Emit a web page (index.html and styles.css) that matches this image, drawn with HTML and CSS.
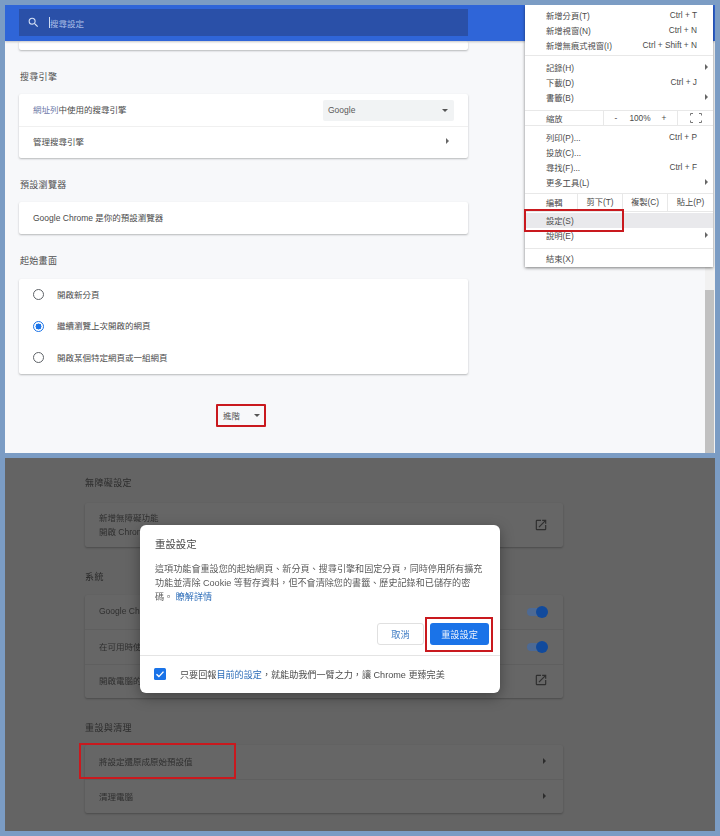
FILE: index.html
```html
<!DOCTYPE html>
<html lang="zh-Hant">
<head>
    <meta charset="UTF-8">
    <title>重設 Chrome 設定</title>
    <link rel="stylesheet" href="styles.css">
</head>
<body>
<div class="page">

    <!-- top shot: settings page with the Chrome menu open -->
    <div class="panel panel-top">
        <header class="header">
            <div class="search">
                <svg class="search-icon" viewBox="0 0 24 24"><path d="M15.5 14h-.79l-.28-.27A6.47 6.47 0 0 0 16 9.5 6.5 6.5 0 1 0 9.5 16c1.61 0 3.09-.59 4.23-1.57l.27.28v.79l5 4.99L20.49 19l-4.99-5zm-6 0C7.01 14 5 11.99 5 9.5S7.01 5 9.5 5 14 7.01 14 9.5 11.99 14 9.5 14z"/></svg>
                <span class="caret"></span>
                <span>搜尋設定</span>
            </div>
        </header>

        <div class="content">
            <div class="card card-cut"></div>

            <h3 class="title">搜尋引擎</h3>
            <div class="card">
                <div class="row">
                    <span><span class="link-soft">網址列</span>中使用的搜尋引擎</span>
                    <div class="select">Google<i class="arrow-down"></i></div>
                </div>
                <div class="row">
                    <span>管理搜尋引擎</span>
                    <i class="arrow-right"></i>
                </div>
            </div>

            <h3 class="title title-b">預設瀏覽器</h3>
            <div class="card">
                <div class="row">Google Chrome 是你的預設瀏覽器</div>
            </div>

            <h3 class="title title-c">起始畫面</h3>
            <div class="card">
                <div class="row row-radio"><i class="radio"></i>開啟新分頁</div>
                <div class="row row-radio"><i class="radio radio-on"></i>繼續瀏覽上次開啟的網頁</div>
                <div class="row row-radio"><i class="radio"></i>開啟某個特定網頁或一組網頁</div>
            </div>

            <div class="advanced">進階<i class="arrow-down"></i></div>
        </div>

        <div class="scrollbar"><div class="thumb"></div></div>

        <div class="menu">
            <div class="menu-group group-1">
                <div class="menu-row">新增分頁(T)<span class="key">Ctrl + T</span></div>
                <div class="menu-row">新增視窗(N)<span class="key">Ctrl + N</span></div>
                <div class="menu-row">新增無痕式視窗(I)<span class="key">Ctrl + Shift + N</span></div>
            </div>
            <div class="menu-group group-2">
                <div class="menu-row">記錄(H)<i class="arrow-right"></i></div>
                <div class="menu-row">下載(D)<span class="key">Ctrl + J</span></div>
                <div class="menu-row">書籤(B)<i class="arrow-right"></i></div>
            </div>
            <div class="menu-cells zoom-cells">
                <span class="cell-first">縮放</span>
                <div class="zoom-mid"><span>-</span><span>100%</span><span>+</span></div>
                <div class="zoom-full">
                    <svg viewBox="0 0 12 10"><path d="M.5 2.5V.5H3M9 .5h2.5v2M11.5 7.5v2H9M3 9.5H.5v-2" fill="none" stroke="#777" stroke-width="1"/></svg>
                </div>
            </div>
            <div class="menu-group group-3">
                <div class="menu-row">列印(P)...<span class="key">Ctrl + P</span></div>
                <div class="menu-row">投放(C)...</div>
                <div class="menu-row">尋找(F)...<span class="key">Ctrl + F</span></div>
                <div class="menu-row">更多工具(L)<i class="arrow-right"></i></div>
            </div>
            <div class="menu-cells edit-cells">
                <span class="cell-first">編輯</span>
                <span>剪下(T)</span>
                <span>複製(C)</span>
                <span>貼上(P)</span>
            </div>
            <div class="menu-group group-4">
                <div class="menu-row menu-row-on">設定(S)</div>
                <div class="menu-row">說明(E)<i class="arrow-right"></i></div>
            </div>
            <div class="menu-group group-5">
                <div class="menu-row">結束(X)</div>
            </div>
        </div>

        <div class="mark mark-settings"></div>
    </div>

    <!-- bottom shot: reset dialog over the dimmed page -->
    <div class="panel panel-bottom">
        <h3 class="title-dim">無障礙設定</h3>
        <div class="card-dim">
            <div class="row-dim row-tall">
                <div>
                    <div>新增無障礙功能</div>
                    <div>開啟 Chrome</div>
                </div>
                <svg class="open-icon" viewBox="0 0 24 24"><path d="M19 19H5V5h7V3H5a2 2 0 0 0-2 2v14a2 2 0 0 0 2 2h14a2 2 0 0 0 2-2v-7h-2v7zM14 3v2h3.59l-9.83 9.83 1.41 1.41L19 6.41V10h2V3h-7z"/></svg>
            </div>
        </div>

        <h3 class="title-dim title-dim-b">系統</h3>
        <div class="card-dim">
            <div class="row-dim">Google Chrome<i class="toggle"></i></div>
            <div class="row-dim">在可用時使用<i class="toggle"></i></div>
            <div class="row-dim">開啟電腦的
                <svg class="open-icon" viewBox="0 0 24 24"><path d="M19 19H5V5h7V3H5a2 2 0 0 0-2 2v14a2 2 0 0 0 2 2h14a2 2 0 0 0 2-2v-7h-2v7zM14 3v2h3.59l-9.83 9.83 1.41 1.41L19 6.41V10h2V3h-7z"/></svg>
            </div>
        </div>

        <h3 class="title-dim title-dim-c">重設與清理</h3>
        <div class="card-dim">
            <div class="row-dim">將設定還原成原始預設值<i class="arrow-right arrow-dark"></i></div>
            <div class="row-dim">清理電腦<i class="arrow-right arrow-dark"></i></div>
        </div>

        <div class="mark mark-restore"></div>

        <div class="dialog">
            <div class="dialog-main">
                <div class="dialog-title">重設設定</div>
                <p class="dialog-text">這項功能會重設您的起始網頁、新分頁、搜尋引擎和固定分頁，同時停用所有擴充功能並清除 Cookie 等暫存資料，但不會清除您的書籤、歷史記錄和已儲存的密碼。 <a class="dialog-link">瞭解詳情</a></p>
                <div class="dialog-actions">
                    <button class="btn btn-cancel">取消</button>
                    <button class="btn btn-reset">重設設定</button>
                </div>
            </div>
            <div class="dialog-foot">
                <svg class="check" viewBox="0 0 12 12"><rect width="12" height="12" rx="1.5" fill="#1a73e8"/><path d="M2.5 6.2l2.4 2.4 4.6-5" fill="none" stroke="#fff" stroke-width="1.4"/></svg>
                <span>只要回報<a class="dialog-link">目前的設定</a>，就能助我們一臂之力，讓 Chrome 更臻完美</span>
            </div>
            <div class="mark mark-reset"></div>
        </div>
    </div>

</div>
</body>
</html>
```

FILE: styles.css
```css
html, body { margin: 0; padding: 0; height: 836px; overflow: hidden; }
body {
    background: #7b9cc4;
    font-family: "Liberation Sans", "Noto Sans CJK TC", sans-serif;
    font-size: 8.5px;
    color: #4a4a4a;
}
i { display: block; }

.page {
    display: flex;
    flex-direction: column;
    gap: 5px;
    padding: 5px;
    filter: blur(0.4px);
}
.panel { position: relative; overflow: hidden; }

/* top panel */
.panel-top { height: 448px; background: #f7f8fa; }
.header {
    height: 36px;
    padding: 4px 0 0 14px;
    box-sizing: border-box;
    background: #2f65d8;
    position: relative;
    box-shadow: 0 1px 2px rgba(60, 64, 67, .3);
}
.search {
    display: flex;
    align-items: center;
    width: 449px;
    height: 27px;
    background: #2a50a8;
    color: #a9bde6;
    font-size: 8.5px;
}
.search-icon { width: 13px; height: 13px; fill: #d5e0f5; margin-left: 8px; margin-right: 9px; }
.caret { width: 1px; height: 11px; background: #cfdaf2; }

.content { padding: 0 0 0 14px; }
.card {
    width: 449px;
    background: #fff;
    border-radius: 2px;
    box-shadow: 0 1px 2px rgba(60, 64, 67, .35);
}
.card-cut { height: 9px; }
.title { margin: 0; padding: 20px 0 10px 1px; height: 14px; line-height: 14px; font-size: 9px; font-weight: 400; letter-spacing: .3px; color: #505050; }
.title-c { height: 15px; }
.row {
    display: flex;
    align-items: center;
    justify-content: space-between;
    height: 32px;
    padding: 0 19px 2px 14px;
    box-sizing: border-box;
}
.row + .row { border-top: 1px solid #f0f0f0; padding-bottom: 3px; }
.link-soft { color: #6b78a8; }
.select {
    display: flex;
    align-items: center;
    justify-content: space-between;
    box-sizing: border-box;
    width: 131px;
    height: 21px;
    margin: 0 -5px -2px 0;
    padding: 0 6px 0 5px;
    background: #f1f3f4;
    font-size: 8.5px;
    color: #5a5a5a;
    border-radius: 2px;
}
.arrow-down { width: 0; height: 0; border: 3px solid transparent; border-top: 3.5px solid #555; border-bottom: 0; }
.arrow-right { width: 0; height: 0; border: 3px solid transparent; border-left: 3.5px solid #666; border-right: 0; }
.arrow-dark { border-left-color: #2c2c2c; }

.row.row-radio { justify-content: flex-start; height: 31.6px; border-top: 0; padding: 0 0 2px 14px; }
.radio {
    width: 11px;
    height: 11px;
    box-sizing: border-box;
    border: 1.5px solid #5f6368;
    border-radius: 50%;
    margin: 2px 13px 0 0;
}
.radio-on { border-color: #1a73e8; background: radial-gradient(circle, #1a73e8 0 2.8px, #fff 3.2px); }

.advanced {
    display: flex;
    align-items: center;
    justify-content: space-between;
    box-sizing: border-box;
    width: 50px;
    height: 23px;
    margin: 30px 0 0 197px;
    padding: 0 4px 0 5px;
    border: 2px solid #c9191e;
    border-radius: 1px;
    color: #555;
}

.scrollbar {
    position: absolute;
    right: 0;
    top: 262px;
    bottom: 0;
    width: 10px;
    padding-top: 23px;
    box-sizing: border-box;
    background: #f1f1f1;
}
.thumb { height: 100%; width: 9px; background: #c1c1c1; }

.menu {
    position: absolute;
    left: 520px;
    top: 0;
    width: 188px;
    height: 262px;
    background: #fff;
    box-shadow: 0 1px 3px rgba(0, 0, 0, .5);
    font-size: 8.3px;
}
.menu-group { box-sizing: border-box; border-bottom: 1px solid #e8e8e8; }
.group-1 { height: 51px; padding-top: 2px; }
.group-2 { height: 54px; padding-top: 3px; border-bottom: 0; }
.group-3 { height: 67px; padding-top: 3px; border-bottom: 0; }
.group-4 { height: 37px; padding-top: 1px; }
.group-5 { height: 21px; padding-top: 1px; border-bottom: 0; }
.menu-row {
    display: flex;
    align-items: center;
    height: 15.2px;
    padding: 0 5px 0 21px;
}
.group-4 .menu-row { box-sizing: border-box; padding-bottom: 2px; }
.menu-row-on { background: #e9e9ec; }
.menu-row .key { margin-left: auto; margin-right: 11px; }
.menu-row .arrow-right { margin-left: auto; }

.menu-cells {
    display: grid;
    align-items: center;
    text-align: center;
    border-top: 1px solid #e8e8e8;
    border-bottom: 1px solid #e8e8e8;
    box-sizing: border-box;
}
.cell-first { text-align: left; padding-left: 21px; }
.edit-cells .cell-first { padding-bottom: 2px; }
.zoom-cells { height: 16px; grid-template-columns: 78px 74px 36px; }
.zoom-mid { height: 100%; display: grid; grid-template-columns: 24px 24px 24px; align-items: center; border-left: 1px solid #e8e8e8; }
.zoom-full { height: 100%; display: flex; align-items: center; justify-content: center; border-left: 1px solid #e8e8e8; }
.zoom-full svg { width: 12px; height: 10px; }
.edit-cells { height: 19px; grid-template-columns: 52px 45px 45px 46px; }
.edit-cells span + span { height: 100%; line-height: 16px; border-left: 1px solid #e8e8e8; }

.mark { position: absolute; box-sizing: border-box; border: 2px solid #c9191e; }
.mark-settings { left: 519px; top: 204px; width: 100px; height: 23px; }

/* bottom panel */
.panel-bottom { height: 373px; background: #646464; padding-left: 80px; color: #2f2f2f; }
.title-dim { margin: 0; height: 14px; line-height: 14px; padding: 18px 0 13px 0; font-size: 9px; font-weight: 400; letter-spacing: .4px; color: #2c2c2c; }
.title-dim-b { padding: 23px 0 11px; }
.title-dim-c { padding: 23px 0 10px; }
.card-dim { width: 478px; background: #666; border-radius: 2px; box-shadow: 0 1px 2px rgba(0, 0, 0, .25); }
.row-dim {
    display: flex;
    align-items: center;
    justify-content: space-between;
    box-sizing: border-box;
    height: 34.3px;
    padding: 0 17px 1.5px 14px;
    border-top: 1px solid #5f5f5f;
}
.row-dim:first-child { border-top: 0; }
.row-tall { height: 44px; line-height: 14px; padding-bottom: 0; }
.open-icon { width: 14px; height: 14px; fill: #2f2f2f; margin-right: -2px; }
.toggle {
    position: relative;
    width: 18px;
    height: 8px;
    margin: 1.5px 1px 0 0;
    border-radius: 4px;
    background: #4e6a93;
}
.toggle::after {
    content: "";
    position: absolute;
    right: -3px;
    top: -2px;
    width: 12px;
    height: 12px;
    border-radius: 50%;
    background: #114a9c;
}
.mark-restore { left: 74px; top: 285px; width: 157px; height: 36px; }

.dialog {
    position: absolute;
    left: 135px;
    top: 67px;
    width: 360px;
    height: 168px;
    background: #fff;
    border-radius: 6px;
    box-shadow: 0 4px 14px rgba(0, 0, 0, .35);
    font-size: 9px;
    color: #5a5a5a;
}
.dialog-main { height: 131px; padding: 13px 11px 0 15px; box-sizing: border-box; border-bottom: 1px solid #e4e4e4; }
.dialog-title { font-size: 10.4px; line-height: 14px; color: #4a4a4a; }
.dialog-text { margin: 10px 4px 0 0; line-height: 14px; height: 42px; font-size: 9.1px; }
.dialog-link { color: #2b6cb8; }
.dialog-actions { display: flex; justify-content: flex-end; gap: 6px; margin-top: 19px; }
.btn {
    height: 22px;
    border-radius: 3px;
    font-family: inherit;
    font-size: 9.2px;
    padding: 0;
}
.btn-cancel { width: 47px; background: #fff; border: 1px solid #e0e0e0; color: #3f7cc4; }
.btn-reset { width: 59px; background: #1a73e8; border: 0; color: #e8f0fd; }
.dialog-foot { display: flex; align-items: center; height: 37px; padding: 0 0 1px 14px; box-sizing: border-box; font-size: 9.1px; color: #4d4d4d; }
.check { width: 12px; height: 12px; margin-right: 14px; }
.mark-reset { left: 285px; top: 92px; width: 68px; height: 35px; }
```
